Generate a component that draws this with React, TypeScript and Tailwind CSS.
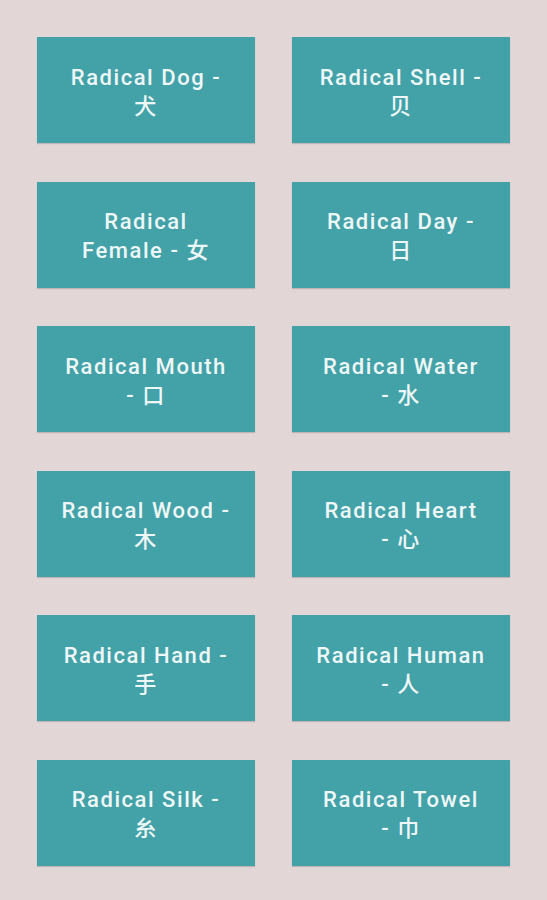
const radicals: [string, string][] = [
  ['Radical Dog -', '犬'],
  ['Radical Shell -', '贝'],
  ['Radical', 'Female - 女'],
  ['Radical Day -', '日'],
  ['Radical Mouth', '- 口'],
  ['Radical Water', '- 水'],
  ['Radical Wood -', '木'],
  ['Radical Heart', '- 心'],
  ['Radical Hand -', '手'],
  ['Radical Human', '- 人'],
  ['Radical Silk -', '糸'],
  ['Radical Towel', '- 巾'],
];

export default function App() {
  return (
    <div className="min-h-[900px] w-[547px] bg-[#e3d6d7] px-[37px] pt-[37px] pb-[35px]">
      <div className="grid grid-cols-2 gap-x-[37px] gap-y-[38.5px]">
        {radicals.map(([first, second]) => (
          <button
            key={first + second}
            className="flex h-[106px] flex-col items-center justify-center bg-[#43a1a8] px-[20px] pt-[3px] text-center text-[22px] leading-[29px] font-medium tracking-[0.07em] whitespace-nowrap text-[#eef7f7] shadow-[0_1px_1px_rgba(0,0,0,0.15)]"
            style={{ fontFamily: 'Roboto, "Noto Sans CJK SC", sans-serif' }}
          >
            <span>{first}</span>
            <span>{second}</span>
          </button>
        ))}
      </div>
    </div>
  );
}
